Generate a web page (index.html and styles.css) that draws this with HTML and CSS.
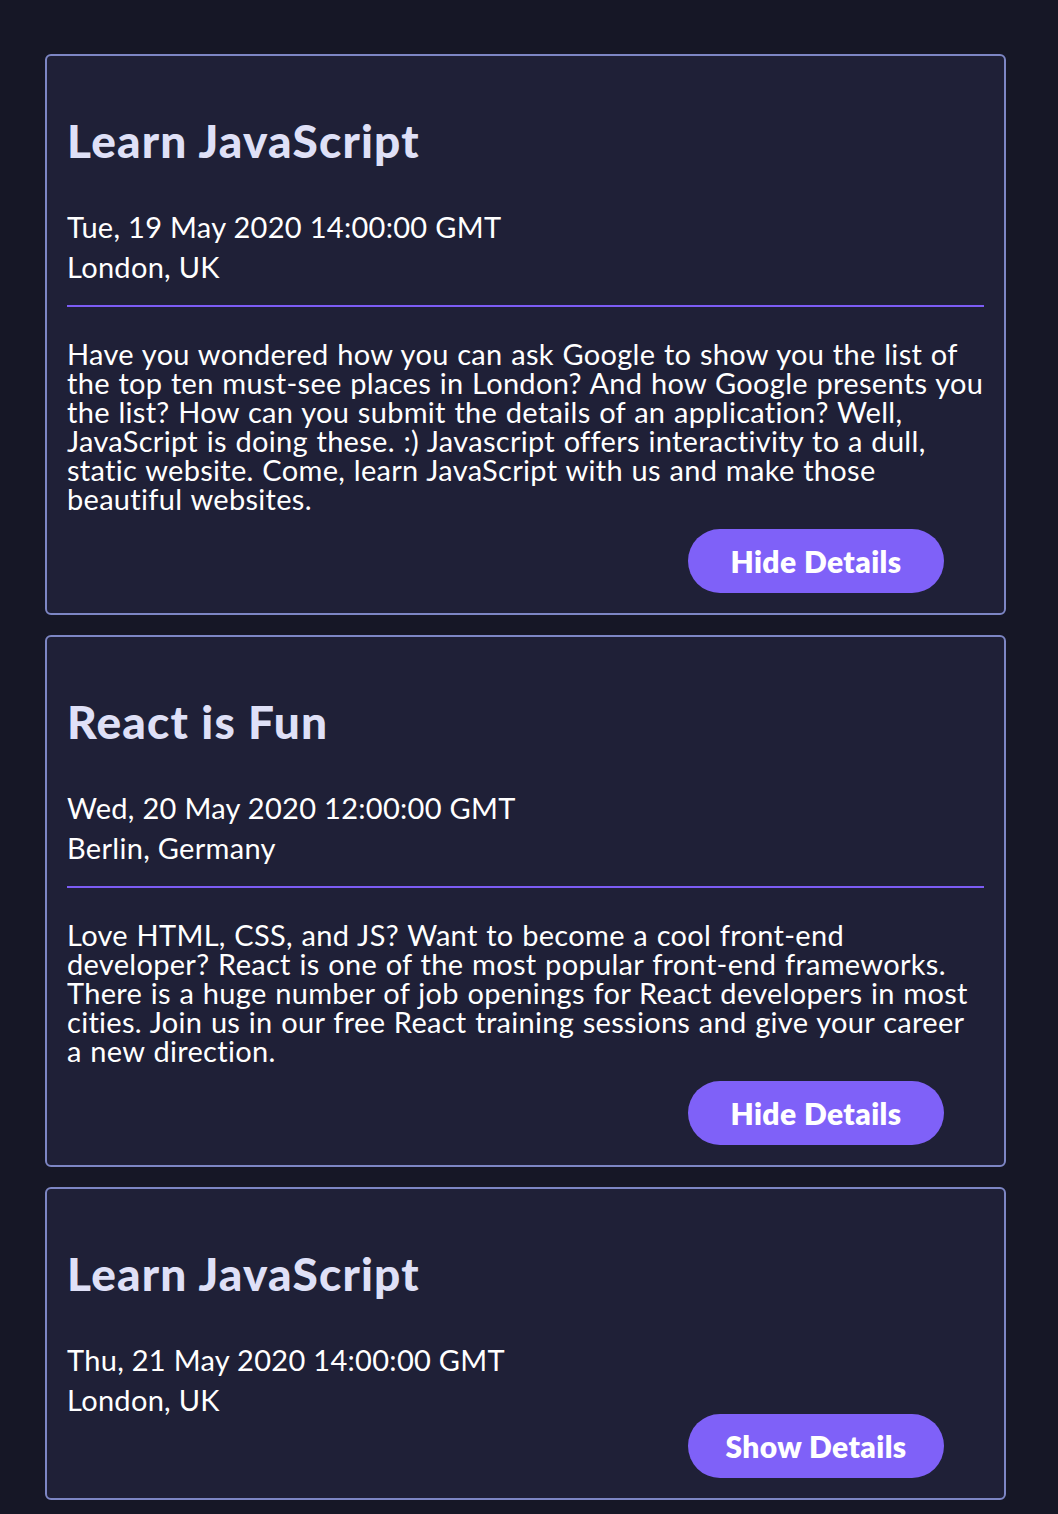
FILE: index.html
```html
<!DOCTYPE html>
<html lang="en">
<head>
<meta charset="utf-8">
<title>Meetups</title>
<link rel="stylesheet" href="styles.css">
</head>
<body>
<main class="list">
  <article class="card">
    <h2 class="title">Learn JavaScript</h2>
    <div class="meta">
      <p class="date">Tue, 19 May 2020 14:00:00 GMT</p>
      <p class="place">London, UK</p>
    </div>
    <hr class="divider">
    <p class="desc">Have you wondered how you can ask Google to show you the list of the top ten must-see places in London? And how Google presents you the list? How can you submit the details of an application? Well, JavaScript is doing these. :) Javascript offers interactivity to a dull, static website. Come, learn JavaScript with us and make those beautiful websites.</p>
    <div class="actions"><button class="btn">Hide Details</button></div>
  </article>
  <article class="card">
    <h2 class="title">React is Fun</h2>
    <div class="meta">
      <p class="date">Wed, 20 May 2020 12:00:00 GMT</p>
      <p class="place">Berlin, Germany</p>
    </div>
    <hr class="divider">
    <p class="desc">Love HTML, CSS, and JS? Want to become a cool front-end developer? React is one of the most popular front-end frameworks. There is a huge number of job openings for React developers in most cities. Join us in our free React training sessions and give your career a new direction.</p>
    <div class="actions"><button class="btn">Hide Details</button></div>
  </article>
  <article class="card">
    <h2 class="title">Learn JavaScript</h2>
    <div class="meta">
      <p class="date">Thu, 21 May 2020 14:00:00 GMT</p>
      <p class="place">London, UK</p>
    </div>
    <div class="actions actions-tight"><button class="btn">Show Details</button></div>
  </article>
</main>
</body>
</html>
```
FILE: styles.css
```css
html, body {
  margin: 0;
  background: #161726;
}
body {
  font-family: "Lato", "Open Sans", sans-serif;
  color: #ffffff;
}
.list {
  padding: 54px 52px 0 45px;
  display: flex;
  flex-direction: column;
  gap: 20px;
}
.card {
  background: #1f2037;
  border: 2px solid #7d86c4;
  border-radius: 6px;
  padding: 20px;
  display: flex;
  flex-direction: column;
}
.title {
  margin: 41px 0 0;
  font-size: 46px;
  line-height: 48px;
  font-weight: 900;
  letter-spacing: 1.2px;
  color: #dfe0f7;
}
.meta {
  margin-top: 42px;
}
.date, .place {
  margin: 0;
  font-size: 29px;
  line-height: 40px;
  letter-spacing: 0.3px;
}
.divider {
  margin: 18px 0 0;
  border: 0;
  height: 2px;
  background: #7c5cf5;
}
.desc {
  margin: 32px 0 0;
  font-size: 29px;
  line-height: 29px;
  letter-spacing: 0.3px;
  word-spacing: 0.9px;
}
.actions {
  display: flex;
  justify-content: flex-end;
  padding-right: 40px;
  margin-top: 16px;
}
.actions-tight {
  margin-top: -6px;
}
.btn {
  width: 256px;
  height: 64px;
  border: 0;
  border-radius: 32px;
  background: #7f61f8;
  color: #ffffff;
  font-family: inherit;
  font-size: 30px;
  font-weight: 800;
  letter-spacing: 0.4px;
  cursor: pointer;
}
```
